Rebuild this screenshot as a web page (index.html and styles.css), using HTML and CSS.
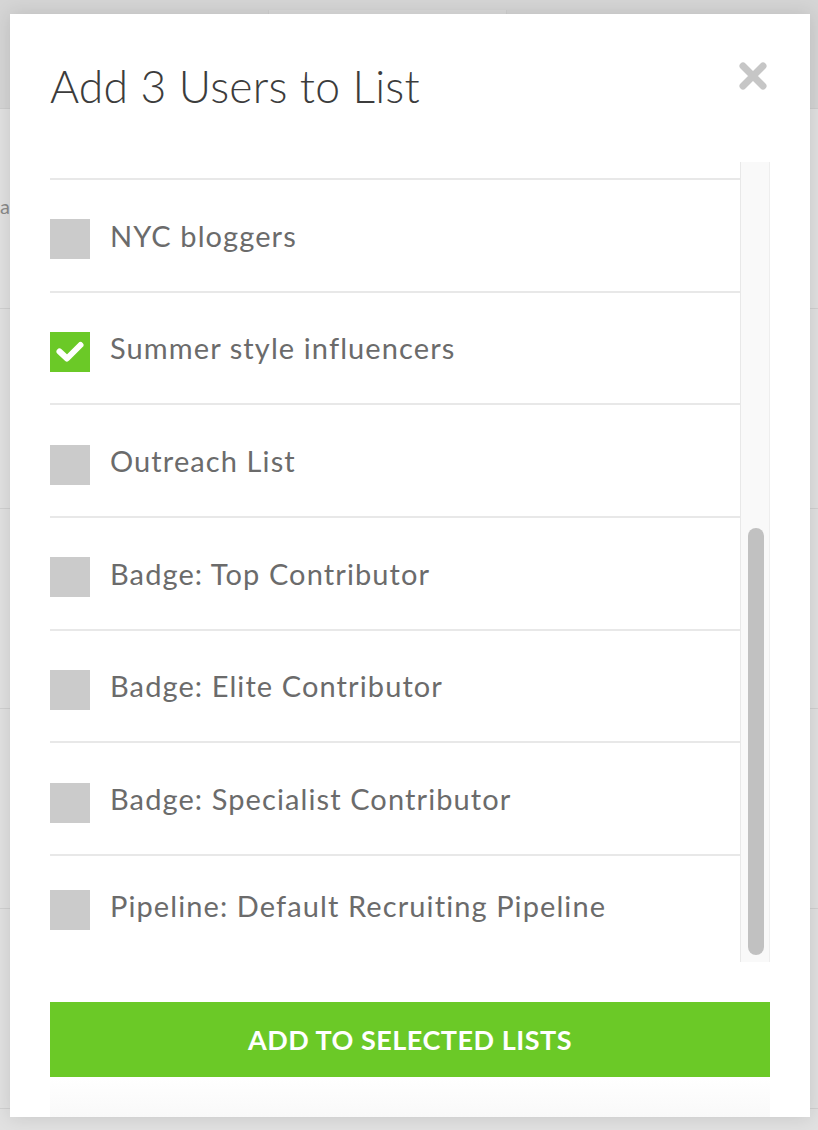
FILE: index.html
```html
<!DOCTYPE html>
<html lang="en">
<head>
  <meta charset="UTF-8">
  <title>Add 3 Users to List</title>
  <link rel="stylesheet" href="styles.css">
</head>
<body>
  <!-- page behind the dialog -->
  <div class="page">
    <div class="page-header">
      <div class="tab"></div>
    </div>
    <div class="page-row"><span class="peek">a</span></div>
    <div class="page-row"></div>
    <div class="page-row"></div>
    <div class="page-row"></div>
    <div class="page-row"></div>
  </div>

  <div class="modal">
    <div class="modal-head">
      <h1>Add 3 Users to List</h1>
      <button class="close" aria-label="Close">
        <svg width="30" height="30" viewBox="0 0 30 30">
          <path d="M5 5 L25 25 M25 5 L5 25" stroke="#c6c6c6" stroke-width="7" stroke-linecap="round"/>
        </svg>
      </button>
    </div>

    <div class="list-wrap">
      <div class="list">
        <div class="list-top"></div>
        <label class="item"><span class="box"></span><span class="name">NYC bloggers</span></label>
        <label class="item"><span class="box checked">
          <svg width="40" height="40" viewBox="0 0 40 40"><path d="M9.5 19.5 L17 26.5 L30.5 13" fill="none" stroke="#fff" stroke-width="6" stroke-linecap="round" stroke-linejoin="round"/></svg>
        </span><span class="name">Summer style influencers</span></label>
        <label class="item"><span class="box"></span><span class="name">Outreach List</span></label>
        <label class="item"><span class="box"></span><span class="name">Badge: Top Contributor</span></label>
        <label class="item"><span class="box"></span><span class="name">Badge: Elite Contributor</span></label>
        <label class="item"><span class="box"></span><span class="name">Badge: Specialist Contributor</span></label>
        <label class="item last"><span class="box"></span><span class="name">Pipeline: Default Recruiting Pipeline</span></label>
      </div>
      <div class="track"><div class="thumb"></div></div>
    </div>

    <button class="add-btn">ADD TO SELECTED LISTS</button>
    <div class="modal-foot"></div>
  </div>
</body>
</html>
```

FILE: styles.css
```css
body {
  margin: 0;
  font-family: Lato, "Open Sans", sans-serif;
  background: #e1e1e1;
  overflow: hidden;
}

.page-header {
  height: 108px;
  background: #d5d5d5;
  border-bottom: 1px solid #cdcdcd;
  position: relative;
}

.tab {
  position: absolute;
  left: 268px;
  top: 10px;
  width: 237px;
  height: 98px;
  background: #dadada;
  border-left: 1px solid #cfcfcf;
  border-right: 1px solid #cfcfcf;
}

.page-row {
  height: 199px;
  border-bottom: 1px solid #d0d0d0;
  position: relative;
}

.peek {
  position: absolute;
  left: 0;
  top: 85px;
  font-size: 20px;
  color: #8a8a8a;
}

.modal {
  position: absolute;
  left: 10px;
  top: 14px;
  width: 800px;
  height: 1103px;
  background: #fff;
  box-shadow: 0 0 18px rgba(0, 0, 0, 0.12);
  padding: 0 40px;
  box-sizing: border-box;
  display: flex;
  flex-direction: column;
}

.modal-head {
  height: 148px;
  display: flex;
  justify-content: space-between;
  align-items: flex-start;
}

.modal-head h1 {
  margin: 45px 0 0;
  font-weight: 300;
  font-size: 44.5px;
  color: #3c3c3c;
  letter-spacing: 0.2px;
}

.close {
  margin-top: 47px;
  margin-right: 2px;
  padding: 0;
  border: none;
  background: none;
}

.list-wrap {
  height: 800px;
  display: flex;
}

.list {
  flex: 1;
  overflow: hidden;
}

.list-top {
  height: 16px;
  border-bottom: 2px solid #e8e8e8;
}

.item {
  display: flex;
  align-items: center;
  height: 110.67px;
  border-bottom: 2px solid #e8e8e8;
  gap: 20px;
}

.item.last {
  height: 100px;
  border-bottom: none;
}

.box {
  width: 40px;
  height: 40px;
  margin-top: 8px;
  background: #cbcbcb;
  flex-shrink: 0;
}

.box.checked {
  background: #6bc927;
}

.box svg {
  display: block;
}

.name {
  font-size: 29px;
  line-height: 1;
  color: #6b6b6b;
  letter-spacing: 1.1px;
}

.track {
  width: 30px;
  background: #f9f9f9;
  border-left: 1px solid #e8e8e8;
  border-right: 1px solid #eeeeee;
  padding: 366px 5px 7px 7px;
  box-sizing: border-box;
}

.thumb {
  height: 100%;
  background: #c1c1c1;
  border-radius: 8px;
}

.add-btn {
  margin-top: 40px;
  height: 75px;
  border: none;
  background: #6bc927;
  color: #fff;
  font-family: Lato, sans-serif;
  font-weight: 700;
  font-size: 27px;
  letter-spacing: 0.5px;
}

.modal-foot {
  flex: 1;
  background: linear-gradient(#fff, #f9f9f9);
}
```
